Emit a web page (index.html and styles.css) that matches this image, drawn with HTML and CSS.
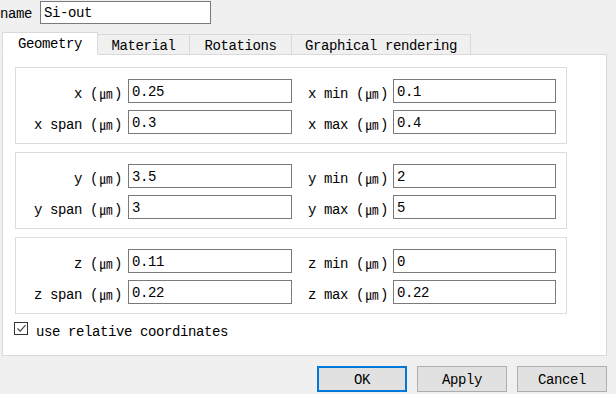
FILE: index.html
```html
<!DOCTYPE html>
<html>
<head>
<meta charset="utf-8">
<link rel="stylesheet" href="styles.css">
</head>
<body>
<div class="dialog">
  <div class="name-row">
    <span class="name-label">name</span>
    <div class="field name-field">Si-out</div>
  </div>
  <div class="tabbar">
    <div class="tab tab-geometry active">Geometry</div>
    <div class="tab tab-material">Material</div>
    <div class="tab tab-rotations">Rotations</div>
    <div class="tab tab-graphical">Graphical rendering</div>
  </div>
  <div class="pane">
    <div class="group">
      <div class="row">
        <span class="lbl lbl-left">x (<span class="unit">㎛</span>)</span>
        <div class="field f-left">0.25</div>
        <span class="lbl lbl-right">x min (<span class="unit">㎛</span>)</span>
        <div class="field f-right">0.1</div>
      </div>
      <div class="row">
        <span class="lbl lbl-left">x span (<span class="unit">㎛</span>)</span>
        <div class="field f-left">0.3</div>
        <span class="lbl lbl-right">x max (<span class="unit">㎛</span>)</span>
        <div class="field f-right">0.4</div>
      </div>
    </div>
    <div class="group">
      <div class="row">
        <span class="lbl lbl-left">y (<span class="unit">㎛</span>)</span>
        <div class="field f-left">3.5</div>
        <span class="lbl lbl-right">y min (<span class="unit">㎛</span>)</span>
        <div class="field f-right">2</div>
      </div>
      <div class="row">
        <span class="lbl lbl-left">y span (<span class="unit">㎛</span>)</span>
        <div class="field f-left">3</div>
        <span class="lbl lbl-right">y max (<span class="unit">㎛</span>)</span>
        <div class="field f-right">5</div>
      </div>
    </div>
    <div class="group">
      <div class="row">
        <span class="lbl lbl-left">z (<span class="unit">㎛</span>)</span>
        <div class="field f-left">0.11</div>
        <span class="lbl lbl-right">z min (<span class="unit">㎛</span>)</span>
        <div class="field f-right">0</div>
      </div>
      <div class="row">
        <span class="lbl lbl-left">z span (<span class="unit">㎛</span>)</span>
        <div class="field f-left">0.22</div>
        <span class="lbl lbl-right">z max (<span class="unit">㎛</span>)</span>
        <div class="field f-right">0.22</div>
      </div>
    </div>
    <div class="check-row">
      <span class="checkbox">
        <svg width="11" height="11" viewBox="0 0 11 11"><path d="M1.5 5.5 L4.2 8.2 L9.5 2.2" fill="none" stroke="#444" stroke-width="1.2"/></svg>
      </span>
      <span class="check-label">use relative coordinates</span>
    </div>
  </div>
  <div class="buttons">
    <div class="btn btn-default">OK</div>
    <div class="btn">Apply</div>
    <div class="btn">Cancel</div>
  </div>
</div>
</body>
</html>
```
FILE: styles.css
```css
* { box-sizing: border-box; }
html, body {
  margin: 0;
  padding: 0;
  background: #f0f0f0;
}
body {
  width: 616px;
  height: 394px;
  overflow: hidden;
  font-family: "Liberation Mono", "Noto Sans CJK SC", monospace;
  font-size: 14px;
  letter-spacing: -0.4px;
  color: #000;
}
.dialog {
  display: flex;
  flex-direction: column;
}
.name-row {
  display: flex;
  align-items: center;
  padding-top: 1px;
  height: 24px;
}
.name-label {
  width: 40px;
  padding-top: 2px;
}
.field {
  background: #fff;
  border: 1px solid #7a7a7a;
  height: 24px;
  padding: 1px 3px 0;
  display: flex;
  align-items: center;
  white-space: nowrap;
}
.name-field {
  width: 171px;
  height: 23px;
}
.tabbar {
  display: flex;
  align-items: flex-end;
  margin-top: 8px;
  margin-left: 2px;
  height: 23px;
  position: relative;
  z-index: 1;
  margin-bottom: -1px;
}
.tab {
  height: 21px;
  border: 1px solid #d9d9d9;
  background: #f0f0f0;
  display: flex;
  align-items: center;
  justify-content: center;
  margin-left: -1px;
  padding-top: 2px;
}
.tab.active {
  height: 23px;
  background: #fff;
  border-bottom-color: #fff;
  margin-left: 0;
  position: relative;
  z-index: 2;
  padding-top: 1px;
  padding-bottom: 1px;
}
.tab-geometry { width: 96px; }
.tab-material { width: 93px; }
.tab-rotations { width: 103px; }
.tab-graphical { width: 180px; }
.pane {
  margin-left: 2px;
  width: 605px;
  height: 302px;
  background: #fff;
  border: 1px solid #d9d9d9;
  padding: 12px 0 0 12px;
}
.group {
  width: 552px;
  border: 1px solid #dcdcdc;
  padding: 11px 0 9px 10px;
  margin-bottom: 8px;
  display: flex;
  flex-direction: column;
  gap: 7px;
}
.row {
  display: flex;
  align-items: center;
}
.lbl {
  text-align: right;
  white-space: nowrap;
  padding-top: 2px;
}
.lbl-left { width: 96px; }
.lbl-right { width: 88px; margin-left: 8px; }
.unit {
  display: inline-block;
  width: 16px;
  font-family: "Noto Sans CJK SC", sans-serif;
  font-size: 13px;
  letter-spacing: 0;
  text-align: center;
}
.f-left { width: 164px; margin-left: 6px; }
.f-right { width: 163px; margin-left: 5px; }
.check-row {
  display: flex;
  align-items: flex-start;
  margin-left: -1px;
  height: 13px;
}
.checkbox {
  width: 14px;
  height: 13px;
  border: 1px solid #333;
  background: #fff;
  display: flex;
  align-items: center;
  justify-content: center;
}
.check-label {
  margin-left: 8px;
  line-height: 16px;
  margin-top: 2px;
}
.buttons {
  display: flex;
  justify-content: flex-end;
  gap: 10px;
  margin-top: 10px;
  padding-right: 9px;
}
.btn {
  width: 90px;
  height: 26px;
  background: #e1e1e1;
  border: 1px solid #adadad;
  display: flex;
  align-items: center;
  justify-content: center;
  padding-top: 1px;
}
.btn-default {
  border: 2px solid #0078d7;
}
```
